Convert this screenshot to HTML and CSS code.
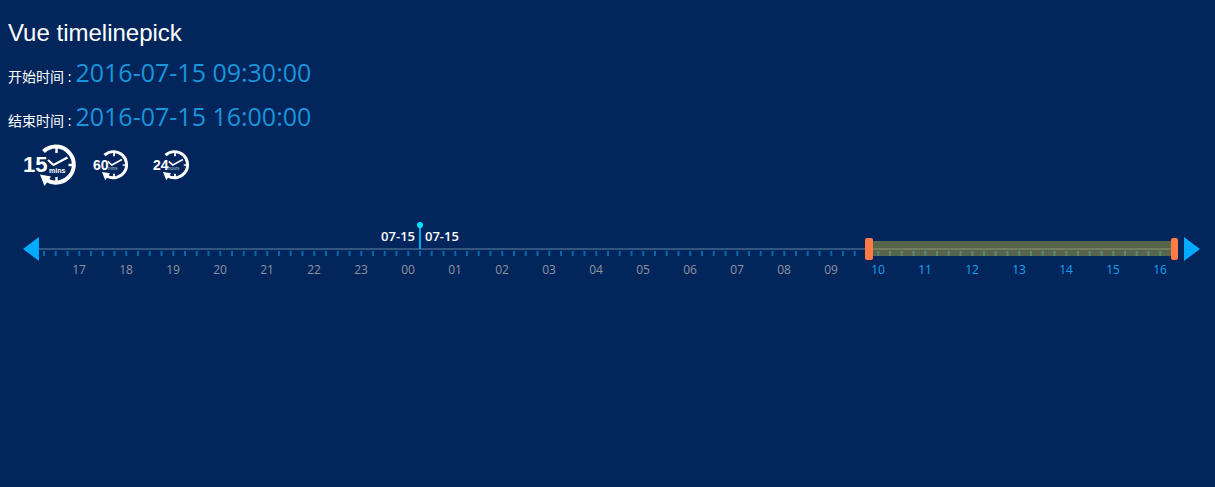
FILE: index.html
```html
<!DOCTYPE html>
<html>
<head>
  <meta charset="utf-8">
  <title>Vue timelinepick</title>
  <link rel="stylesheet" href="styles.css">
</head>
<body>
  <h1 class="title">Vue timelinepick</h1>
  <p class="time-row"><span class="time-label">开始时间 :</span> <span class="time-value">2016-07-15 09:30:00</span></p>
  <p class="time-row"><span class="time-label">结束时间 :</span> <span class="time-value">2016-07-15 16:00:00</span></p>

  <svg width="0" height="0" class="defs">
    <symbol id="clock" viewBox="0 0 44 44">
      <path d="M9 8.5A18 18 0 1 1 12 37" fill="none" stroke="#fff" stroke-width="4"/>
      <path d="M5.5 31.5l11 2-6.5 9.5z" fill="#fff"/>
      <path d="M22 4v6M40 22h-6M22 40v-6" stroke="#fff" stroke-width="2.4"/>
      <path d="M13.5 17l5.5 5 14-7.5" fill="none" stroke="#fff" stroke-width="2.2"/>
    </symbol>
  </svg>

  <div class="ranges">
    <svg width="60" height="44" viewBox="0 0 60 44">
      <use href="#clock" x="14.5" y="0" width="44" height="44"/>
      <text class="num" x="3" y="29" font-size="22">15</text>
      <text class="unit" x="29" y="30" font-size="7">mins</text>
    </svg>
    <svg class="icon-60" width="42" height="32" viewBox="0 0 42 32">
      <use href="#clock" x="9" y="0" width="32" height="32"/>
      <text class="num" x="4" y="21" font-size="14">60</text>
      <text class="unit dim" x="19" y="21" font-size="4.5">mins</text>
    </svg>
    <svg width="42" height="32" viewBox="0 0 42 32">
      <use href="#clock" x="9" y="0" width="32" height="32"/>
      <text class="num" x="3" y="21" font-size="14">24</text>
      <text class="unit dim" x="18" y="21" font-size="4.5">hours</text>
    </svg>
  </div>

  <div class="timeline">
    <div class="arrow arrow-left"></div>
    <div class="track">
      <div class="line"></div>
      <svg class="ticks" width="1132" height="5">
        <line x1="4" y1="2.5" x2="1130" y2="2.5" stroke="#0a66aa" stroke-width="5" stroke-dasharray="2 9.75"/>
      </svg>
      <div class="hours">
        <span>17</span><span>18</span><span>19</span><span>20</span><span>21</span><span>22</span><span>23</span>
        <span>00</span><span>01</span><span>02</span><span>03</span><span>04</span><span>05</span><span>06</span>
        <span>07</span><span>08</span><span>09</span>
        <span class="on">10</span><span class="on">11</span><span class="on">12</span><span class="on">13</span>
        <span class="on">14</span><span class="on">15</span><span class="on">16</span>
      </div>

      <div class="range"></div>
      <div class="handle handle-start"></div>
      <div class="handle handle-end"></div>
      <div class="pointer">
        <span class="pointer-date pointer-before">07-15</span>
        <span class="pointer-date pointer-after">07-15</span>
      </div>
    </div>
    <div class="arrow arrow-right"></div>
  </div>
</body>
</html>
```

FILE: styles.css
```css
html, body {
  height: 100%;
}
body {
  margin: 0;
  padding: 0 8px;
  box-sizing: border-box;
  overflow: hidden;
  color: #fff;
  background-color: #02265c;
  font-family: "Open Sans", "Noto Sans CJK SC", sans-serif;
}

.title {
  margin: 0;
  padding: 19px 0 3px;
  font-family: "Liberation Sans", sans-serif;
  font-size: 24px;
  font-weight: normal;
  line-height: 28px;
}

.time-row {
  margin: 0;
  height: 44px;
  line-height: 44px;
  white-space: nowrap;
}
.time-label {
  font-size: 14px;
}
.time-value {
  color: #1a94da;
  font-size: 25px;
}

.defs {
  position: absolute;
}

.ranges {
  display: flex;
  align-items: center;
  gap: 19px;
  height: 44px;
  margin-top: 5px;
  padding-left: 12px;
}
.icon-60 {
  margin-left: -10px;
}
.num {
  fill: #fff;
  font-family: "Liberation Sans", sans-serif;
  font-weight: bold;
}
.unit {
  fill: #fff;
  font-family: "Liberation Sans", sans-serif;
  font-weight: bold;
}
.unit.dim {
  fill: #b9c6da;
  font-weight: normal;
}

.timeline {
  display: flex;
  align-items: flex-start;
  margin-top: 50px;
  padding: 0 10px 0 15px;
}
.arrow {
  flex: none;
  width: 0;
  height: 0;
  border-top: 12px solid transparent;
  border-bottom: 12px solid transparent;
}
.arrow-left {
  border-right: 16px solid #00aaff;
}
.arrow-right {
  border-left: 16px solid #00aaff;
}

.track {
  position: relative;
  flex: 1;
  padding-top: 11px;
}
.line {
  height: 2px;
  margin-right: 12px;
  background-color: #30557f;
}
.ticks {
  display: block;
  margin-top: 1px;
}
.hours {
  display: flex;
  margin-top: 6px;
  padding-left: 16.5px;
  color: #8e929e;
  font-size: 12px;
  line-height: 16px;
}
.hours span {
  flex: none;
  width: 47px;
  text-align: center;
}
.hours .on {
  color: #12a0ee;
}

.range {
  position: absolute;
  left: 834px;
  top: 4px;
  width: 298px;
  height: 15px;
  background-color: rgba(190, 180, 60, 0.45);
}
.handle {
  position: absolute;
  top: 1px;
  height: 22px;
  border-radius: 2px;
  background-color: #ff7a45;
}
.handle-start {
  left: 826px;
  width: 8px;
}
.handle-end {
  left: 1132px;
  width: 7px;
}

.pointer {
  position: absolute;
  left: 380px;
  top: -12px;
  width: 2px;
  height: 24px;
  background-color: #00a8f0;
}
.pointer::before {
  content: "";
  position: absolute;
  left: -2px;
  top: -3px;
  width: 6px;
  height: 6px;
  border-radius: 50%;
  background-color: #00e5ff;
}
.pointer-date {
  position: absolute;
  top: 2px;
  font-size: 13px;
  font-weight: 600;
  line-height: 18px;
  white-space: nowrap;
}
.pointer-before {
  right: 6px;
}
.pointer-after {
  left: 6px;
}
```
